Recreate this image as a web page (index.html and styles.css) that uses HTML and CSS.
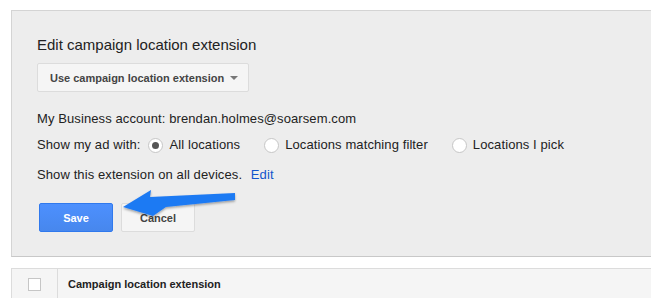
FILE: index.html
```html
<!DOCTYPE html>
<html>
<head>
    <title>Edit campaign location extension</title>
    <link rel="stylesheet" href="styles.css">
</head>
<body>
    <div class="panel">
        <h2 class="title">Edit campaign location extension</h2>
        <button class="dropdown">Use campaign location extension <span class="caret"></span></button>

        <p class="line first">My Business account: brendan.holmes@soarsem.com</p>
        <div class="line radios">
            <span class="label">Show my ad with:</span>
            <label class="radio"><span class="dot checked"></span>All locations</label>
            <label class="radio"><span class="dot"></span>Locations matching filter</label>
            <label class="radio"><span class="dot"></span>Locations I pick</label>
        </div>
        <p class="line devices">Show this extension on all devices. <a href="#" class="link">Edit</a></p>

        <div class="actions">
            <button class="btn save">Save</button>
            <button class="btn cancel">Cancel</button>
        </div>

        <svg class="arrow" width="130" height="40" viewBox="0 0 130 40">
            <defs>
                <filter id="shadow" x="-10%" y="-30%" width="120%" height="160%">
                    <feDropShadow dx="0" dy="1.5" stdDeviation="1.2" flood-color="#000" flood-opacity="0.35"/>
                </filter>
            </defs>
            <polygon points="3,23 31,6 30,13 115,9 115,16 46,23 33,32" fill="#1f7af3" filter="url(#shadow)"/>
        </svg>
    </div>

    <div class="table">
        <div class="row head">
            <div class="check-cell"><span class="box"></span></div>
            <div class="name-cell">Campaign location extension</div>
        </div>
    </div>
</body>
</html>
```

FILE: styles.css
```css
body { margin: 0; padding: 10px 0 0 11px; font-family: Arial, "Liberation Sans", sans-serif; color: #222; overflow: hidden; background: #fff; }

.panel { position: relative; margin-right: -20px; background: #ededed; border: 1px solid #d4d4d4; border-bottom-color: #c8c8c8; padding: 24px 25px 24px; }
.title { margin: 0; font-size: 15px; font-weight: normal; line-height: 20px; color: #222; }

.dropdown { display: flex; align-items: center; margin-top: 8px; height: 29px; padding: 0 10px 0 12px; background: #f5f5f5; border: 1px solid #dcdcdc; border-radius: 2px; font: bold 11px Arial, "Liberation Sans", sans-serif; color: #444; }
.caret { width: 0; height: 0; margin-left: 6px; border-left: 4px solid transparent; border-right: 4px solid transparent; border-top: 4px solid #777; }

.line { margin: 6px 0 0; font-size: 13px; line-height: 20px; letter-spacing: 0.1px; }
.line.first { margin-top: 17px; }
.line.devices { margin-top: 10px; }
.radios { display: flex; align-items: center; }
.radio { display: flex; align-items: center; }
.label { margin-right: 8px; }
.radio + .radio { margin-left: 24px; }
.dot { position: relative; width: 13px; height: 13px; margin-right: 6px; border: 1px solid #c6c6c6; border-radius: 50%; background: #fff; }
.dot.checked::after { content: ""; position: absolute; left: 3px; top: 3px; width: 7px; height: 7px; border-radius: 50%; background: #555; }
.link { color: #15c; text-decoration: none; margin-left: 5px; }

.actions { display: flex; align-items: center; gap: 8px; margin-top: 18px; padding-left: 2px; }
.btn { height: 29px; min-width: 74px; border-radius: 2px; font: bold 11px Arial, "Liberation Sans", sans-serif; }
.save { background: linear-gradient(#4d90fe, #4787ed); border: 1px solid #3079ed; color: #fff; }
.cancel { background: #f5f5f5; border: 1px solid #dcdcdc; color: #444; }

.arrow { position: absolute; left: 108px; top: 173px; }

.table { margin-top: 11px; margin-right: -20px; border: 1px solid #dcdcdc; border-bottom: none; background: #f5f5f5; }
.row { display: flex; height: 30px; }
.check-cell { display: flex; align-items: center; justify-content: center; width: 45px; border-right: 1px solid #dcdcdc; }
.box { width: 11px; height: 11px; border: 1px solid #c6c6c6; background: #fff; }
.name-cell { display: flex; align-items: center; padding-left: 10px; font-size: 11px; font-weight: bold; color: #222; }
```
